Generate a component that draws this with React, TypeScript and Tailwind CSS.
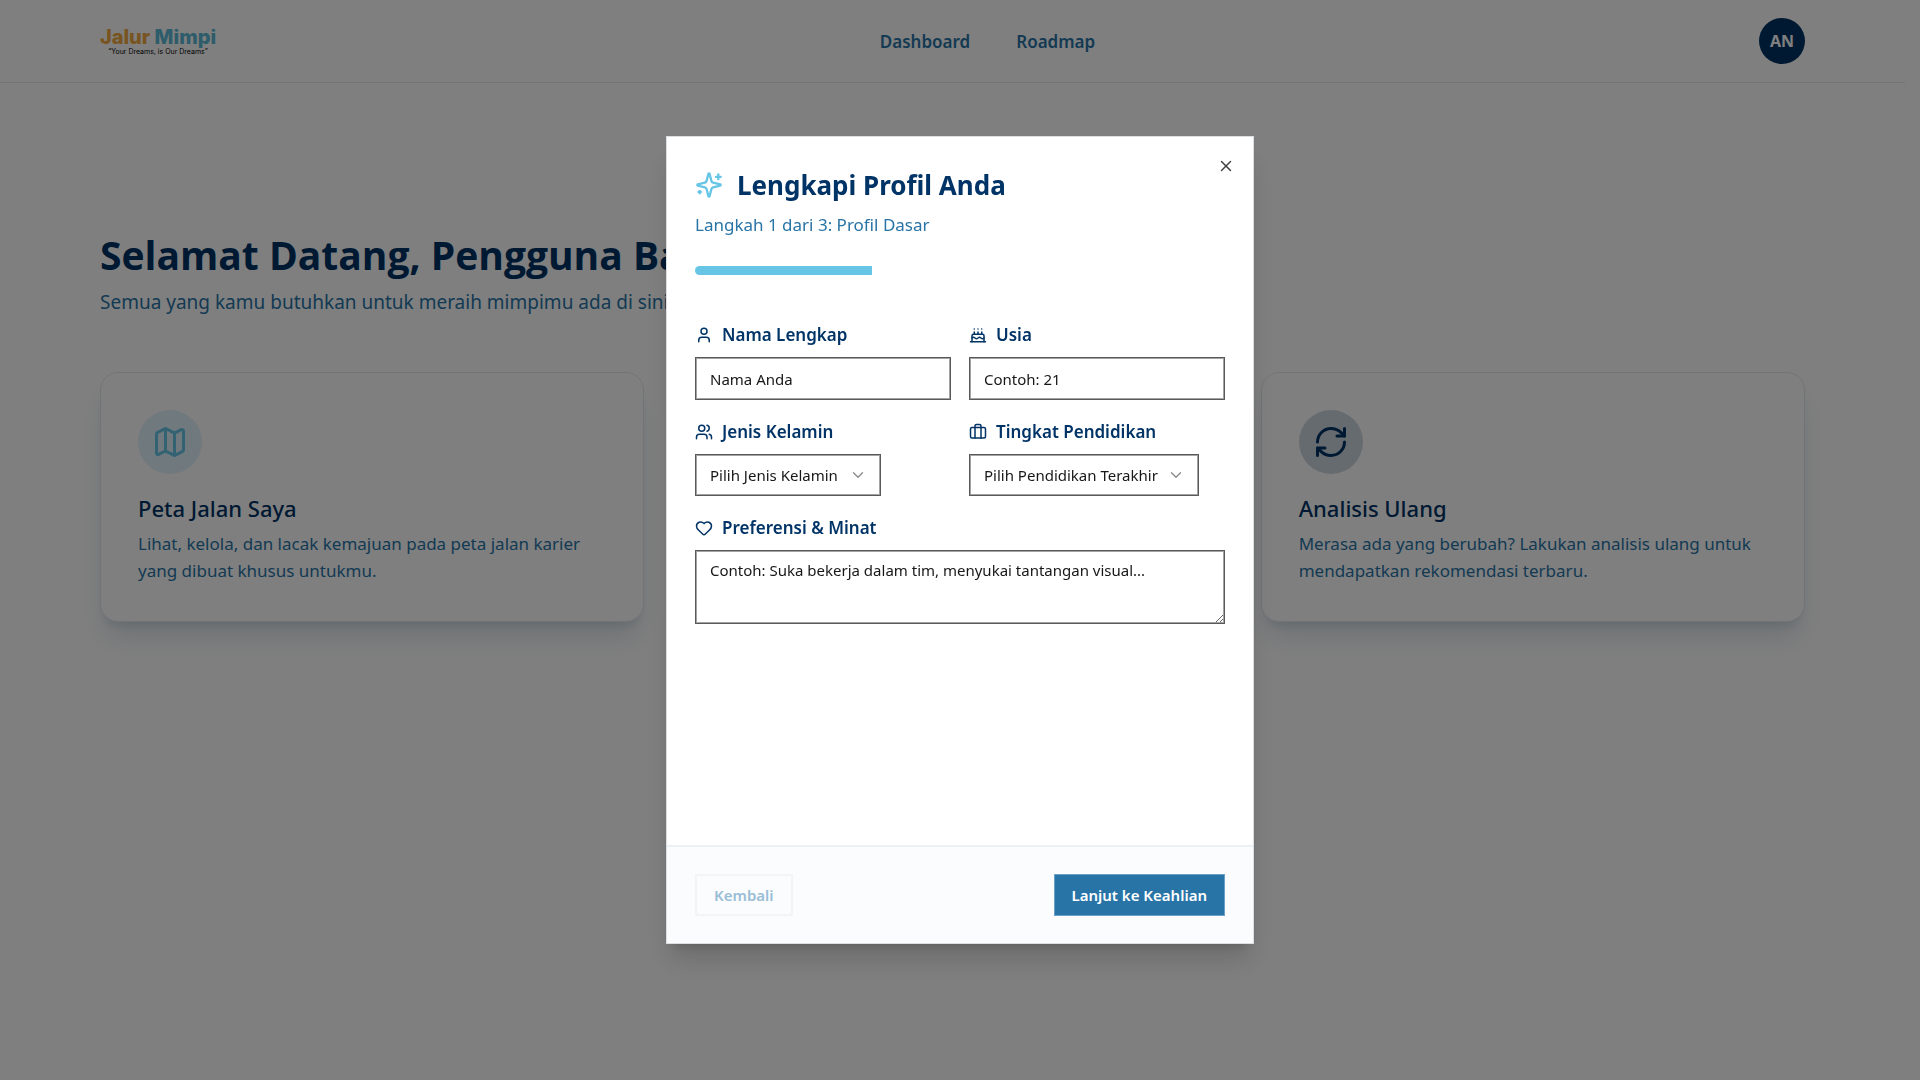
import { useState, type ReactNode } from "react";
import { Briefcase, ChevronDown, Heart, Map, RefreshCw, User, Users, X } from "lucide-react";

const navLinks = [
  { label: "Dashboard", href: "#dashboard" },
  { label: "Roadmap", href: "#roadmap" },
];

const genders = ["Laki-laki", "Perempuan"];
const educations = ["SMA/SMK", "Diploma", "Sarjana"];

const fieldClass =
  "border border-[#595959] ring-1 ring-inset ring-[#a3a3a3] bg-white pl-3.5 text-[15px] text-[#171717] placeholder:text-[#171717] placeholder:opacity-100 outline-none";

function Icon({ className, children }: { className: string; children: ReactNode }) {
  return (
    <svg
      viewBox="0 0 24 24"
      className={className}
      fill="none"
      stroke="currentColor"
      strokeWidth="2"
      strokeLinecap="round"
      strokeLinejoin="round"
      aria-hidden="true"
    >
      {children}
    </svg>
  );
}

function CakeIcon() {
  return (
    <Icon className="size-[18px]">
      <path d="M20 21v-8a2 2 0 0 0-2-2H6a2 2 0 0 0-2 2v8" />
      <path d="M4 16s.5-1 2-1 2.500 2 4 2 2.500-2 4-2 2.500 2 4 2 2-1 2-1" />
      <path d="M2 21h20" />
      <path d="M7 8v3M12 8v3M17 8v3" />
      <path d="M7 4h.01M12 4h.01M17 4h.01" />
    </Icon>
  );
}

function SparklesIcon() {
  return (
    <Icon className="size-7 text-[#67c5e6]">
      <path d="M9.937 15.5A2 2 0 0 0 8.5 14.063l-6.135-1.582a.5.5 0 0 1 0-.962L8.5 9.936A2 2 0 0 0 9.937 8.5l1.582-6.135a.5.5 0 0 1 .963 0L14.063 8.5A2 2 0 0 0 15.5 9.937l6.135 1.581a.5.5 0 0 1 0 .964L15.5 14.063a2 2 0 0 0-1.437 1.437l-1.582 6.135a.5.5 0 0 1-.963 0z" />
      <path d="M20 3v4M22 5h-4" />
      <path d="M4 17v2M5 18H3" />
    </Icon>
  );
}

function Navbar() {
  return (
    <header className="border-b border-[#e2e6ea]">
      <div className="flex h-[82px] items-center justify-between px-[100px]">
        <a href="#home" className="flex w-[116px] flex-col items-center leading-none">
          <span className="font-['Inter'] text-[20px] leading-[22px] font-extrabold whitespace-nowrap text-[#f0a940]">
            Jalur <span className="text-[#5bb8d4]">Mimpi</span>
          </span>
          <span className="font-['Inter'] text-[7px] leading-2 whitespace-nowrap text-black">
            “Your Dreams, is Our Dreams”
          </span>
        </a>
        <nav className="flex gap-[46px] pt-0.5">
          {navLinks.map((link) => (
            <a key={link.label} href={link.href} className="text-[17px] leading-7 font-semibold text-[#2874a6]">
              {link.label}
            </a>
          ))}
        </nav>
        <button className="flex size-[46px] items-center justify-center rounded-full bg-[#003366] text-[16px] font-bold text-white">
          AN
        </button>
      </div>
    </header>
  );
}

type FeatureCardProps = {
  icon: ReactNode;
  iconClass: string;
  title: string;
  text: string;
  className?: string;
};

function FeatureCard({ icon, iconClass, title, text, className = "" }: FeatureCardProps) {
  return (
    <article
      className={`rounded-[18px] border border-[#e2e8ec] bg-white px-[37px] py-[37px] shadow-xl shadow-[#1e4e72]/15 ${className}`}
    >
      <div className={`mb-[18px] flex size-16 items-center justify-center rounded-full ${iconClass}`}>{icon}</div>
      <h2 className="text-[22px] leading-8 font-medium text-[#003366]">{title}</h2>
      <p className="mt-1.5 text-[17px] leading-[27px] text-[#2874a6]">{text}</p>
    </article>
  );
}

function FieldLabel({ htmlFor, icon, children }: { htmlFor: string; icon: ReactNode; children: ReactNode }) {
  return (
    <label htmlFor={htmlFor} className="flex items-center gap-[9px] text-[17px] leading-[27px] font-semibold text-[#003366]">
      {icon}
      {children}
    </label>
  );
}

function SelectField({ id, placeholder, options, className }: { id: string; placeholder: string; options: string[]; className: string }) {
  return (
    <div className={`relative ${className}`}>
      <select id={id} defaultValue="" className={`h-[42px] w-full appearance-none pr-9 ${fieldClass}`}>
        <option value="">{placeholder}</option>
        {options.map((option) => (
          <option key={option}>{option}</option>
        ))}
      </select>
      <ChevronDown className="pointer-events-none absolute top-3 right-3.5 size-[18px] text-[#8a8a8a]" strokeWidth={1.75} />
    </div>
  );
}

function ProfileDialog({ onClose }: { onClose: () => void }) {
  const step = 1;
  const totalSteps = 3;

  return (
    <div className="fixed inset-0 z-50 flex items-center justify-center bg-black/50">
      <div
        role="dialog"
        aria-modal="true"
        aria-labelledby="dialog-title"
        className="relative flex min-h-[808px] w-full max-w-[588px] flex-col border border-[#dcdfe2] bg-white shadow-xl shadow-black/15"
      >
        <button onClick={onClose} aria-label="Tutup" className="absolute top-5 right-[18px] text-[#404040]">
          <X className="size-[18px]" />
        </button>

        <div className="px-7 pt-7">
          <div className="flex items-center gap-3.5">
            <SparklesIcon />
            <h2 id="dialog-title" className="text-[26px] leading-10 font-bold text-[#003366]">
              Lengkapi Profil Anda
            </h2>
          </div>
          <p className="mt-1.5 text-[17px] leading-[27px] text-[#2874a6]">Langkah 1 dari 3: Profil Dasar</p>
          <div className="mt-7 h-[9px] overflow-hidden rounded-full bg-white">
            <div className="h-full bg-[#67c5e6]" style={{ width: `${(step / totalSteps) * 100}%` }} />
          </div>
        </div>

        <form id="profile-form" className="grid flex-1 grid-cols-2 content-start gap-[18px] px-7 pt-[46px]">
          <div className="flex flex-col gap-[9px]">
            <FieldLabel htmlFor="name" icon={<User className="size-[18px]" />}>
              Nama Lengkap
            </FieldLabel>
            <input id="name" placeholder="Nama Anda" className={`h-[43px] ${fieldClass}`} />
          </div>
          <div className="flex flex-col gap-[9px]">
            <FieldLabel htmlFor="age" icon={<CakeIcon />}>
              Usia
            </FieldLabel>
            <input id="age" placeholder="Contoh: 21" className={`h-[43px] ${fieldClass}`} />
          </div>
          <div className="flex flex-col gap-[9px]">
            <FieldLabel htmlFor="gender" icon={<Users className="size-[18px]" />}>
              Jenis Kelamin
            </FieldLabel>
            <SelectField id="gender" placeholder="Pilih Jenis Kelamin" options={genders} className="w-[186px]" />
          </div>
          <div className="flex flex-col gap-[9px]">
            <FieldLabel htmlFor="education" icon={<Briefcase className="size-[18px]" />}>
              Tingkat Pendidikan
            </FieldLabel>
            <SelectField id="education" placeholder="Pilih Pendidikan Terakhir" options={educations} className="w-[230px]" />
          </div>
          <div className="col-span-2 flex flex-col gap-[9px]">
            <FieldLabel htmlFor="interests" icon={<Heart className="size-[18px]" />}>
              Preferensi &amp; Minat
            </FieldLabel>
            <textarea
              id="interests"
              placeholder="Contoh: Suka bekerja dalam tim, menyukai tantangan visual..."
              className={`h-[74px] resize-y py-2 ${fieldClass}`}
            />
          </div>
        </form>

        <div className="flex items-center justify-between border-t-2 border-[#eef1f4] bg-[#fbfcfe] px-7 py-[27px]">
          <button disabled className="h-[42px] border-2 border-[#f2f4f6] px-[17px] text-[15px] font-semibold text-[#9abdd6]">
            Kembali
          </button>
          <button
            form="profile-form"
            type="button"
            className="h-[42px] border border-[#6ba0c8] bg-[#2874a6] px-[17px] text-[15px] font-semibold text-white"
          >
            Lanjut ke Keahlian
          </button>
        </div>
      </div>
    </div>
  );
}

export default function App() {
  const [open, setOpen] = useState(true);

  return (
    <div className="min-h-screen bg-white font-['Noto_Sans','Open_Sans',sans-serif]">
      <div className="pr-[15px]">
        <Navbar />
        <main className="px-[100px] pt-36">
          <h1 className="font-['Open_Sans','Noto_Sans',sans-serif] text-[39px] leading-[56px] font-bold text-[#003366]">
            Selamat Datang, Pengguna Baru!
          </h1>
          <p className="mt-1 text-[19px] leading-[30px] text-[#2874a6]">
            Semua yang kamu butuhkan untuk meraih mimpimu ada di sini.
          </p>
          <div className="mt-[55px] grid grid-cols-3 gap-9">
            <FeatureCard
              icon={<Map className="size-9 text-[#67c5e6]" />}
              iconClass="bg-[#67c5e6]/20"
              title="Peta Jalan Saya"
              text="Lihat, kelola, dan lacak kemajuan pada peta jalan karier yang dibuat khusus untukmu."
            />
            <FeatureCard
              icon={<RefreshCw className="size-9 text-[#003366]" />}
              iconClass="bg-[#003366]/20"
              title="Analisis Ulang"
              text="Merasa ada yang berubah? Lakukan analisis ulang untuk mendapatkan rekomendasi terbaru."
              className="col-start-3"
            />
          </div>
        </main>
      </div>
      {open && <ProfileDialog onClose={() => setOpen(false)} />}
    </div>
  );
}
